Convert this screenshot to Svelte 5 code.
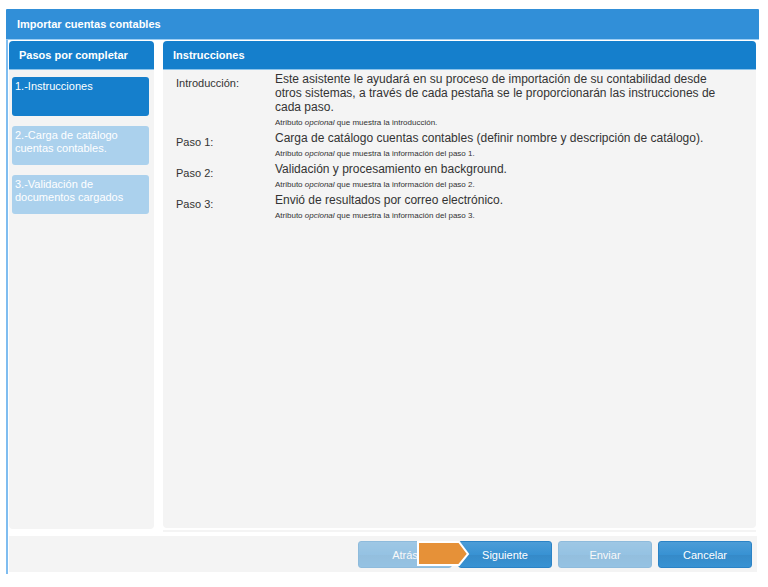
<script lang="ts">
  let current = $state(0);

  const steps = [
    "1.-Instrucciones",
    "2.-Carga de catálogo cuentas contables.",
    "3.-Validación de documentos cargados",
  ];

  const instructions = [
    {
      label: "Introducción:",
      text: "Este asistente le ayudará en su proceso de importación de su contabilidad desde otros sistemas, a través de cada pestaña se le proporcionarán las instrucciones de cada paso.",
      note: "que muestra la introducción.",
    },
    {
      label: "Paso 1:",
      text: "Carga de catálogo cuentas contables (definir nombre y descripción de catálogo).",
      note: "que muestra la información del paso 1.",
    },
    {
      label: "Paso 2:",
      text: "Validación y procesamiento en background.",
      note: "que muestra la información del paso 2.",
    },
    {
      label: "Paso 3:",
      text: "Envió de resultados por correo electrónico.",
      note: "que muestra la información del paso 3.",
    },
  ];

  function next() {
    if (current < steps.length - 1) current += 1;
  }

  function back() {
    if (current > 0) current -= 1;
  }
</script>

<main class="page">
  <section class="dialog">
    <h1 class="title">Importar cuentas contables</h1>

    <div class="frame">
      <div class="body">
        <nav class="panel steps">
          <h2>Pasos por completar</h2>
          <div class="stepList">
            {#each steps as step, i}
              <button type="button" class="step" disabled={i !== current}>{step}</button>
            {/each}
          </div>
        </nav>

        <div class="content">
          <section class="panel instructions">
            <h2>Instrucciones</h2>
            <dl>
              {#each instructions as item}
                <dt>{item.label}</dt>
                <dd>
                  <p>{item.text}</p>
                  <small>Atributo <em>opcional</em> {item.note}</small>
                </dd>
              {/each}
            </dl>
          </section>
          <div class="rule"></div>
        </div>
      </div>

      <footer>
        <button type="button" class="action" disabled={current === 0} onclick={back}>Atrás</button>
        <div class="pointed">
          <button type="button" class="action" onclick={next}>Siguiente</button>
          <svg class="arrow" width="53" height="26" viewBox="0 0 53 26" aria-hidden="true">
            <path d="M1 1H42L51 13L42 24H1Z" fill="#e69138" stroke="#fff" stroke-width="2" />
          </svg>
        </div>
        <button type="button" class="action" disabled={current < steps.length - 1}>Enviar</button>
        <button type="button" class="action">Cancelar</button>
      </footer>
    </div>
  </section>
</main>

<style>
  :global(body) {
    background: #fff;
  }

  .page {
    display: flex;
    box-sizing: border-box;
    min-height: 100vh;
    padding: 9px 9px 13px 6px;
    font-family: "Liberation Sans", Arial, sans-serif;
    color: #333;
  }

  .dialog {
    flex: 1;
    display: flex;
    flex-direction: column;
    min-width: 0;
  }

  h1,
  h2,
  p,
  dl,
  dd {
    margin: 0;
  }

  h1,
  h2 {
    font-size: 11px;
    font-weight: bold;
    color: #fff;
  }

  .title {
    padding: 0 11px;
    line-height: 30px;
    background: #318fd8;
    border-bottom: 1px solid #9dcdf2;
    border-radius: 1px 1px 0 0;
  }

  .frame {
    flex: 1;
    display: flex;
    flex-direction: column;
    padding: 1px 2px 2px 1px;
    border-left: 2px solid #7fbdf0;
  }

  .body {
    flex: 1;
    display: flex;
    gap: 9px;
    padding: 0 1px 4px 0;
  }

  .panel {
    background: #f4f4f4;
    border-radius: 4px;
  }

  .panel h2 {
    padding: 0 10px;
    line-height: 28px;
    background: #157fcc;
    border-bottom: 1px solid #8cc3ea;
    border-radius: 4px 4px 0 0;
  }

  .steps {
    flex: 0 0 145px;
    margin-bottom: 3px;
  }

  .stepList {
    display: flex;
    flex-direction: column;
    gap: 10px;
    padding: 7px 5px 7px 3px;
  }

  .step {
    display: flex;
    align-items: flex-start;
    height: 39px;
    padding: 3px 3px;
    border: 0;
    border-radius: 3px;
    background: #157fcc;
    font-family: inherit;
    font-size: 11px;
    line-height: 13px;
    text-align: left;
    color: #fff;
  }

  .step:disabled {
    background: #abd1ed;
  }

  .content {
    flex: 1;
    display: flex;
    flex-direction: column;
    gap: 2px;
    min-width: 0;
  }

  .instructions {
    flex: 1;
  }

  .rule {
    height: 2px;
    background: #f4f4f4;
  }

  dl {
    display: grid;
    grid-template-columns: 99px 1fr;
    padding: 2px 24px 0 13px;
    font-size: 12px;
    line-height: 14px;
  }

  dt {
    padding-top: 4px;
    font-size: 11px;
  }

  small {
    display: block;
    font-size: 8px;
    line-height: 17px;
  }

  footer {
    display: flex;
    justify-content: flex-end;
    gap: 6px;
    padding: 5px 5px 4px;
    background: #f4f4f4;
  }

  .action {
    width: 94px;
    height: 27px;
    padding: 0;
    border: 1px solid #2b83c6;
    border-radius: 3px;
    background: linear-gradient(#4b9cd7, #3892d3 50%, #358ac8 52%, #3892d3);
    font-family: inherit;
    font-size: 11px;
    color: #fff;
  }

  .action:disabled {
    opacity: 0.5;
  }

  .pointed {
    position: relative;
  }

  /* Marker that points at the next action, laid over the previous button */
  .arrow {
    position: absolute;
    top: 0;
    right: 82px;
  }
</style>
